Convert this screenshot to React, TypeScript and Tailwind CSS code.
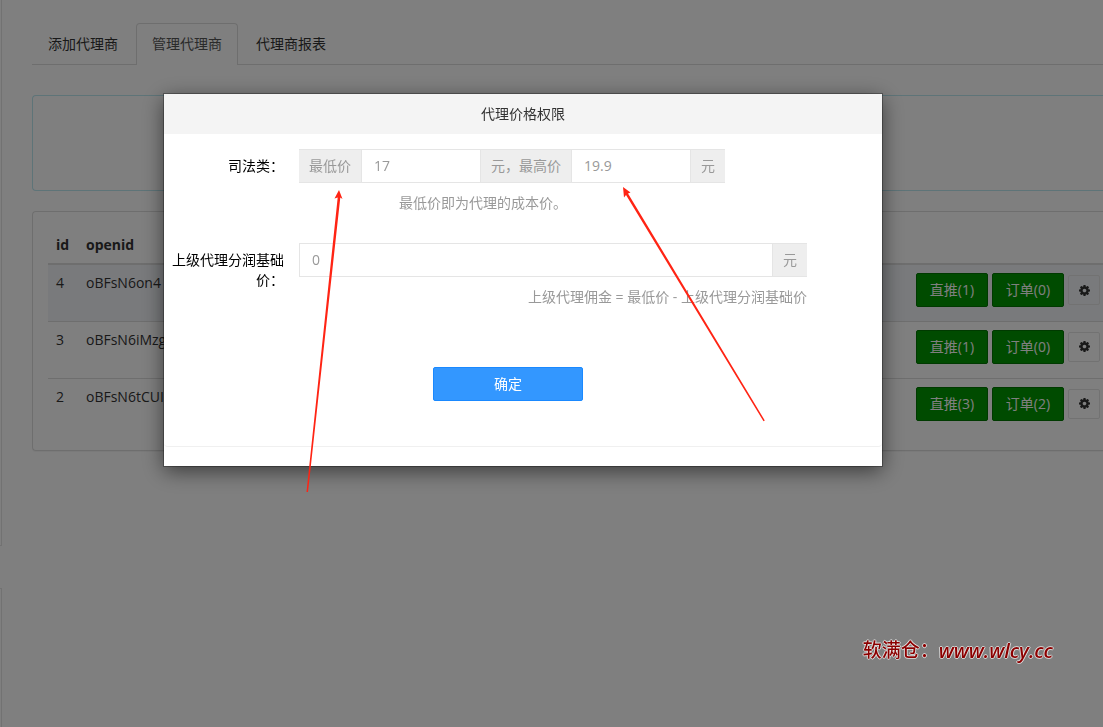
import type { ReactNode } from "react"

interface Agent {
  id: number
  openid: string
  direct: number
  orders: number
}

const agents: Agent[] = [
  { id: 4, openid: "oBFsN6on4", direct: 1, orders: 0 },
  { id: 3, openid: "oBFsN6iMzg", direct: 1, orders: 0 },
  { id: 2, openid: "oBFsN6tCUI", direct: 3, orders: 2 },
]

const tabs = ["添加代理商", "管理代理商", "代理商报表"]

const CogIcon = () => (
  <svg viewBox="0 128 1536 1536" className="size-[11px] fill-current" aria-hidden="true">
    <path d="M1024 896q0-106-75-181t-181-75-181 75-75 181 75 181 181 75 181-75 75-181zm512-109v222q0 12-8 23t-20 13l-185 28q-19 54-39 91 35 50 107 138 10 12 10 25t-9 23q-27 37-99 108t-94 71q-12 0-26-9l-138-108q-44 23-91 38-16 136-29 186-7 28-36 28h-222q-14 0-24.5-8.5t-11.5-21.5l-28-184q-49-16-90-37l-141 107q-10 9-25 9-14 0-25-11-126-114-165-168-7-10-7-23 0-12 8-23 15-21 51-66.5t54-70.5q-27-50-41-99l-183-27q-13-2-21-12.5t-8-23.5v-222q0-12 8-23t19-13l186-28q14-46 39-92-40-57-107-138-10-12-10-24 0-10 9-23 26-36 98.5-107.5t94.5-71.5q13 0 26 10l138 107q44-23 91-38 16-136 29-186 7-28 36-28h222q14 0 24.5 8.5t11.5 21.5l28 184q49 16 90 37l142-107q9-9 24-9 13 0 25 10 129 119 165 170 7 8 7 22 0 12-8 23-15 21-51 66.5t-54 70.5q26 50 41 98l183 28q13 2 21 12.5t8 23.5z" />
  </svg>
)

const Tabs = () => (
  <nav className="flex gap-0.5 border-b border-[#ddd]">
    {tabs.map((tab, i) => (
      <a
        key={tab}
        href="#"
        className={
          i === 1
            ? "-mb-px rounded-t border border-b-0 border-[#ddd] bg-white px-[15px] pt-2.5 pb-[11px] text-[#555]"
            : "-mb-px border border-transparent px-[15px] py-2.5 text-[#333]"
        }
      >
        {tab}
      </a>
    ))}
  </nav>
)

const GreenButton = ({ children }: { children: ReactNode }) => (
  <button type="button" className="h-[34px] w-[72px] rounded-[2px] border border-[#007500] bg-[#009600] text-white">
    {children}
  </button>
)

const AgentTable = () => (
  <table className="w-full table-fixed border-collapse text-left">
    <thead>
      <tr className="border-b-2 border-[#ddd]">
        <th className="w-[30px] p-2 pr-0">id</th>
        <th className="p-2">openid</th>
        <th className="w-[195px] p-2" />
      </tr>
    </thead>
    <tbody>
      {agents.map((agent) => (
        <tr key={agent.id} className="h-[57px] border-b border-[#ddd] align-top first:bg-[#f2f5f9] last:border-b-0">
          <td className="py-2 pl-2">{agent.id}</td>
          <td className="p-2">{agent.openid}</td>
          <td className="py-2 pl-2">
            <div className="flex items-center gap-1">
              <GreenButton>直推({agent.direct})</GreenButton>
              <GreenButton>订单({agent.orders})</GreenButton>
              <button
                type="button"
                aria-label="设置"
                className="flex h-[30px] w-8 items-center justify-center rounded-[2px] border border-[#e5e5e5]"
              >
                <CogIcon />
              </button>
            </div>
          </td>
        </tr>
      ))}
    </tbody>
  </table>
)

const Addon = ({ children }: { children: ReactNode }) => (
  <span className="flex shrink-0 items-center border-y border-[#e5e5e5] bg-[#eee] px-2.5">{children}</span>
)

const Arrows = () => (
  <svg className="pointer-events-none absolute top-0 left-0 h-full w-full overflow-visible fill-[#ff2414]" aria-hidden="true">
    <path d="M175 96 L178.5 105 L176.3 103.5 L144 398 L142.5 398 L173.7 103.5 L170.5 104.5 Z" />
    <path d="M459 93 L466.5 98.5 L464 99.5 L600.8 326.5 L599.5 327.3 L462 101 L460 103.5 Z" />
  </svg>
)

const PriceDialog = () => (
  <div
    role="dialog"
    aria-labelledby="price-title"
    className="relative w-full max-w-[718px] bg-white shadow-[0_0_0_1px_rgba(0,0,0,0.3),0_5px_20px_rgba(0,0,0,0.55)]"
  >
    <h2 id="price-title" className="bg-[#f4f4f4] py-2.5 text-center text-[#333]">
      代理价格权限
    </h2>
    <form className="pt-[15px] pb-[19px]">
      <div className="flex gap-[15px] pl-2">
        <label htmlFor="min-price" className="w-28 shrink-0 pt-[7px] text-right">
          司法类：
        </label>
        <div className="text-[#999]">
          <div className="flex h-[34px]">
            <Addon>最低价</Addon>
            <input
              id="min-price"
              defaultValue="17"
              className="w-[120px] min-w-0 border border-[#e5e5e5] bg-white px-3"
            />
            <Addon>元，最高价</Addon>
            <input
              aria-label="最高价"
              defaultValue="19.9"
              className="w-[120px] min-w-0 border border-[#e5e5e5] bg-white px-3"
            />
            <Addon>元</Addon>
          </div>
          <p className="pt-2.5 pl-25">最低价即为代理的成本价。</p>
        </div>
      </div>
      <div className="flex gap-[15px] pt-[30px] pr-[75px] pl-2">
        <label htmlFor="base-price" className="w-28 shrink-0 pt-[7px] text-right">
          上级代理分润基础价：
        </label>
        <div className="grow text-[#999]">
          <div className="flex h-[34px]">
            <input
              id="base-price"
              defaultValue="0"
              className="min-w-0 grow border border-[#e5e5e5] bg-white px-3"
            />
            <Addon>元</Addon>
          </div>
          <p className="pt-2.5 text-right">上级代理佣金 = 最低价 - 上级代理分润基础价</p>
        </div>
      </div>
      <div className="rounded-b border-b border-[#f0f0f0] pt-[60px] pr-[30px] pb-[45px] text-center">
        <button
          type="submit"
          className="h-[34px] w-[150px] rounded-[2px] border border-[#1a89ff] bg-[#3397ff] text-white"
        >
          确定
        </button>
      </div>
    </form>
    <Arrows />
  </div>
)

export default function App() {
  return (
    <div className="flex min-h-screen overflow-hidden bg-white font-['Open_Sans','Noto_Sans_CJK_SC',sans-serif] text-sm text-[#333]">
      <aside className="flex w-0.5 shrink-0 flex-col gap-[42px]">
        <div className="h-[546px] border-r border-b border-[#e4e4e4]" />
        <div className="grow border-t border-r border-[#e4e4e4]" />
      </aside>
      <main className="min-w-0 grow pt-[23px] pl-[30px]">
        <Tabs />
        <section className="mt-[30px] h-24 rounded-l border border-r-0 border-[#bce8f1]" />
        <section className="mt-5 rounded-l border border-r-0 border-[#ddd] py-[15px] pl-[15px] shadow-[0_1px_1px_rgba(0,0,0,0.05)]">
          <AgentTable />
        </section>
      </main>

      <div className="fixed inset-0 flex items-start justify-center bg-black/50 pt-[94px] pr-[57px] text-black">
        <PriceDialog />
      </div>

      <p className="fixed right-[50px] bottom-[62px] flex items-center text-[19px] font-medium text-[#8b0000] [text-shadow:1px_0_#fff9,-1px_0_#fff9,0_1px_#fff9,0_-1px_#fff9]">
        软满仓：<span className="text-xl font-semibold italic">www.wlcy.cc</span>
      </p>
    </div>
  )
}
